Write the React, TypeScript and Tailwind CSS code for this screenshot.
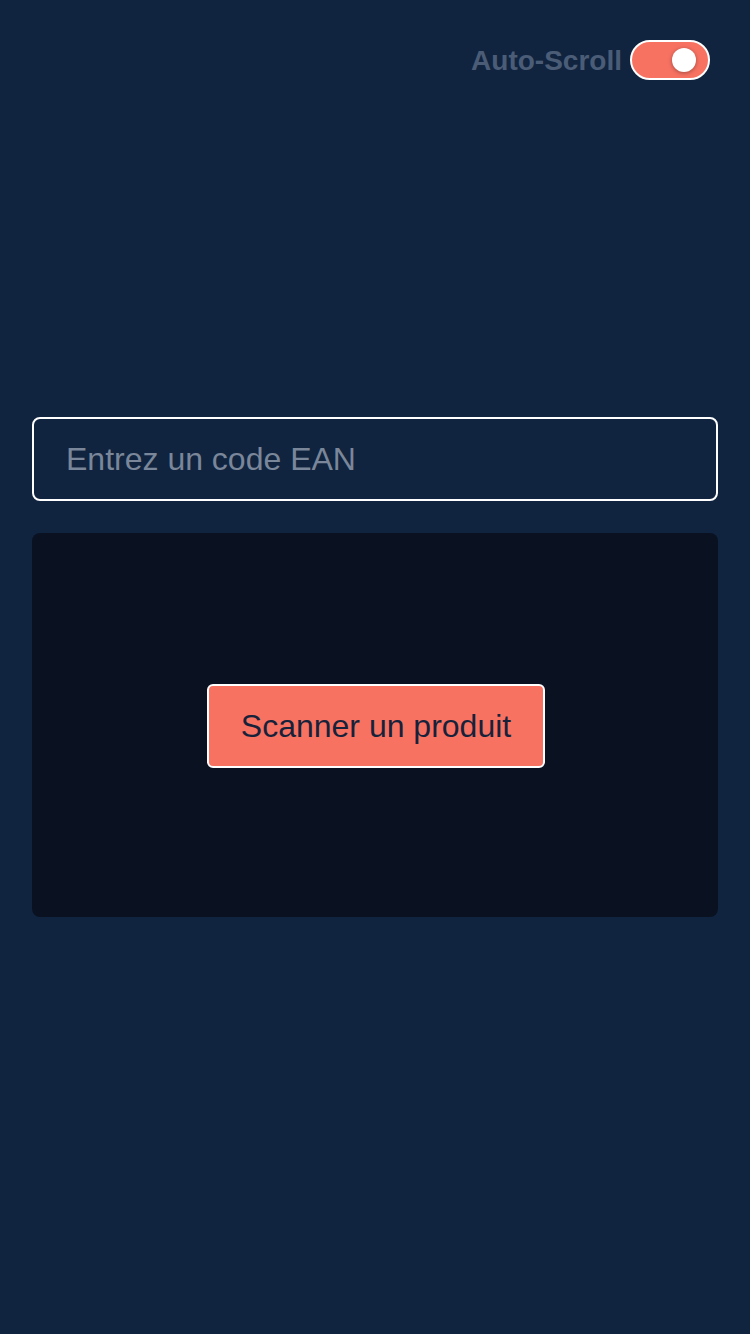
import React, { useState } from 'react';

const App = () => {
  const [autoScroll, setAutoScroll] = useState(true);
  const [code, setCode] = useState('');

  return (
    <div
      className="min-h-[1334px] w-full bg-[#10243f] px-8 pt-10"
      style={{ fontFamily: '"Liberation Sans", Arial, sans-serif' }}
    >
      {/* Top bar */}
      <div className="flex items-center justify-end gap-2 pr-2">
        <span className="mt-[2px] text-[28px] font-bold leading-none text-[#4b5c77]">Auto-Scroll</span>
        <button
          onClick={() => setAutoScroll(!autoScroll)}
          className={`relative h-10 w-20 rounded-full border-2 border-white ${autoScroll ? 'bg-[#f87262]' : 'bg-[#4b5c77]'}`}
        >
          <span
            className={`absolute top-[6px] h-6 w-6 rounded-full bg-white shadow-[0_1px_4px_rgba(0,0,0,0.35)] ${autoScroll ? 'right-3' : 'left-3'}`}
          />
        </button>
      </div>

      {/* EAN input */}
      <input
        value={code}
        onChange={(e) => setCode(e.target.value)}
        placeholder="Entrez un code EAN"
        className="mt-[337px] block h-[84px] w-full rounded-lg border-2 border-white bg-transparent px-8 text-[32px] text-white outline-none placeholder:text-[#7a8699]"
      />

      {/* Scanner area */}
      <div className="mt-8 flex h-[384px] items-center justify-center rounded-lg bg-[#0a1222] pt-[2px] pl-[2px]">
        <button className="rounded-md border-2 border-white bg-[#f87262] px-8 py-5 text-[32px] leading-10 text-[#16223a]">
          Scanner un produit
        </button>
      </div>
    </div>
  );
};

export default App;
